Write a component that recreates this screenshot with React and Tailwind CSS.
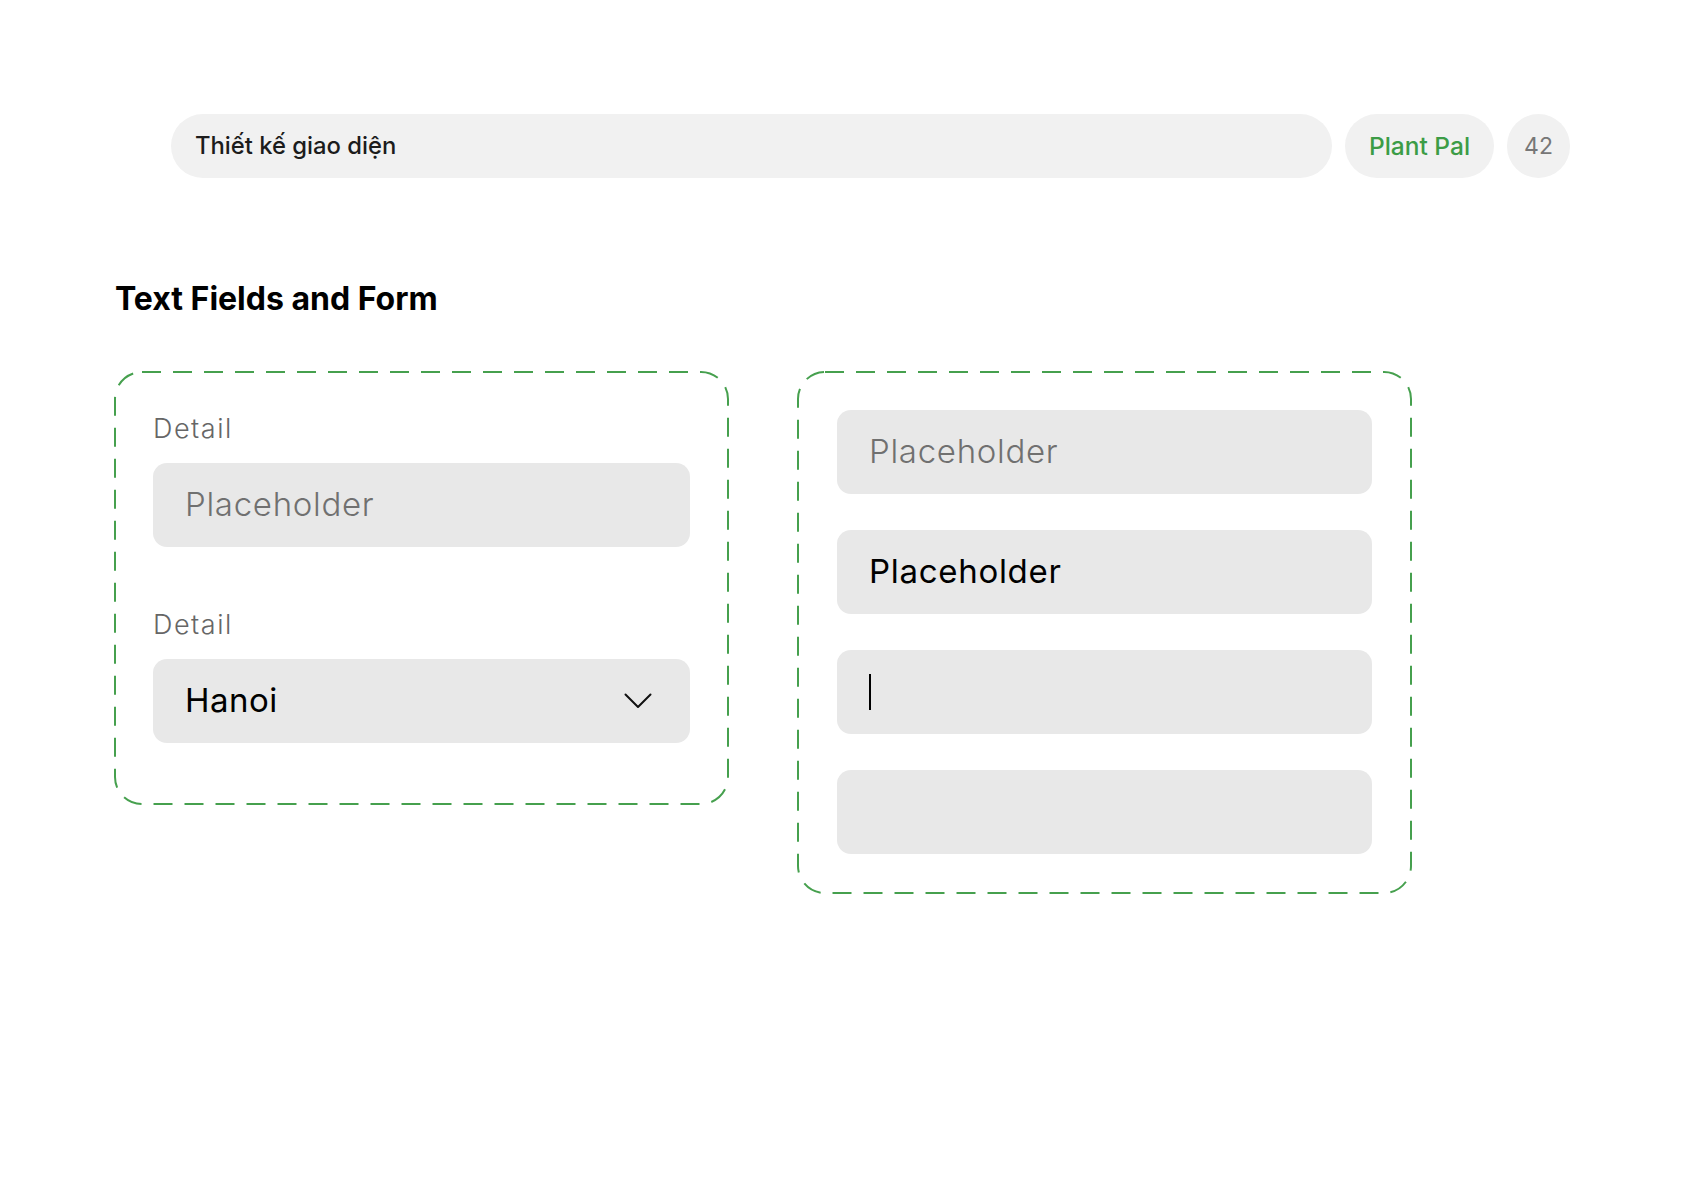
import React from 'react';

function DashedFrame({ children, className = '' }) {
  return (
    <div className={`relative w-[615px] ${className}`}>
      {/* dashed outline, drawn so the dash length matches the mockup */}
      <svg className="pointer-events-none absolute inset-[1px] h-[calc(100%-2px)] w-[calc(100%-2px)] overflow-visible">
        <rect
          x="0"
          y="0"
          width="100%"
          height="100%"
          rx="27"
          ry="27"
          fill="none"
          stroke="#46a04e"
          strokeWidth="2"
          strokeDasharray="19 12"
        />
      </svg>
      {children}
    </div>
  );
}

function Field({ children, className = '' }) {
  return (
    <div className={`flex h-[84px] w-full items-center rounded-[14px] bg-[#e8e8e8] pl-[32px] pr-[38px] ${className}`}>
      {children}
    </div>
  );
}

function Label({ children }) {
  return <div className="text-[27px] leading-[30px] font-light tracking-[1.5px] text-[#666666]">{children}</div>;
}

export default function App() {
  return (
    <div className="min-h-[1190px] w-full bg-white font-['Inter',sans-serif]">
      {/* Top bar */}
      <div className="flex items-center gap-[13px] pt-[114px] pl-[171px] pr-[113px]">
        <div className="flex h-16 flex-1 items-center rounded-full bg-[#f1f1f1] px-6">
          <span className="text-[23.8px] font-medium text-[#1c1c1c]">Thiết kế giao diện</span>
        </div>
        <div className="flex h-16 w-[149px] items-center justify-center rounded-full bg-[#f1f1f1]">
          <span className="text-[24.5px] font-medium text-[#3c9c46]">Plant Pal</span>
        </div>
        <div className="flex h-16 w-[63px] items-center justify-center rounded-full bg-[#f1f1f1]">
          <span className="text-[23px] text-[#777777]">42</span>
        </div>
      </div>

      <h1 className="mt-[103px] pl-[115px] text-[32px] leading-[36px] font-bold text-black">Text Fields and Form</h1>

      <div className="mt-[54px] flex items-start gap-[68px] pl-[114px]">
        {/* Labeled fields */}
        <DashedFrame className="px-[39px] pt-[43px] pb-[62px]">
          <Label>Detail</Label>
          <Field className="mt-[19px]">
            <span className="text-[33px] font-light tracking-[0.7px] text-[#707070]">Placeholder</span>
          </Field>
          <div className="mt-[63px]">
            <Label>Detail</Label>
          </div>
          <Field className="mt-[19px] justify-between">
            <span className="text-[33px] font-normal tracking-[0.5px] text-black">Hanoi</span>
            <svg width="28" height="16" viewBox="0 0 28 16" fill="none">
              <polyline points="1.5,1.5 14,14 26.5,1.5" stroke="#111111" strokeWidth="2" strokeLinecap="round" strokeLinejoin="round" />
            </svg>
          </Field>
        </DashedFrame>

        {/* Field states */}
        <DashedFrame className="flex flex-col gap-[36px] px-[40px] pt-[39px] pb-[40px]">
          <Field>
            <span className="text-[33px] font-light tracking-[0.7px] text-[#707070]">Placeholder</span>
          </Field>
          <Field>
            <span className="text-[33px] font-normal tracking-[0.7px] text-black">Placeholder</span>
          </Field>
          <Field>
            <span className="h-[36px] w-[2px] bg-black" />
          </Field>
          <Field />
        </DashedFrame>
      </div>
    </div>
  );
}
